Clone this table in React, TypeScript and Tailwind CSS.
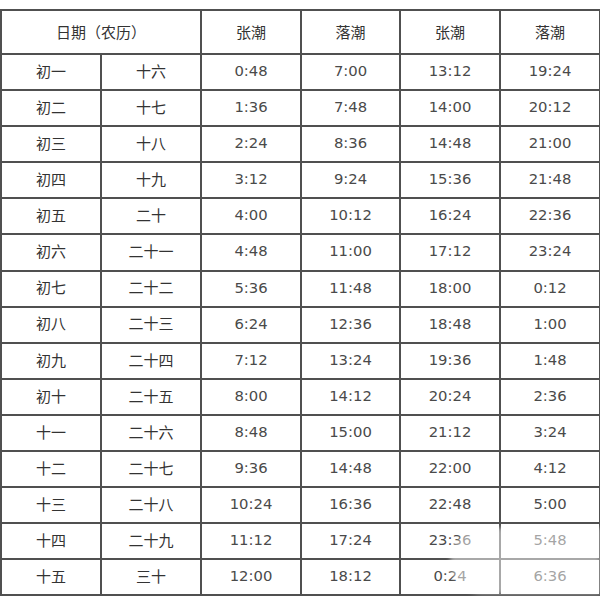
const rows: [string, string, string, string, string, string][] = [
  ['初一', '十六', '0:48', '7:00', '13:12', '19:24'],
  ['初二', '十七', '1:36', '7:48', '14:00', '20:12'],
  ['初三', '十八', '2:24', '8:36', '14:48', '21:00'],
  ['初四', '十九', '3:12', '9:24', '15:36', '21:48'],
  ['初五', '二十', '4:00', '10:12', '16:24', '22:36'],
  ['初六', '二十一', '4:48', '11:00', '17:12', '23:24'],
  ['初七', '二十二', '5:36', '11:48', '18:00', '0:12'],
  ['初八', '二十三', '6:24', '12:36', '18:48', '1:00'],
  ['初九', '二十四', '7:12', '13:24', '19:36', '1:48'],
  ['初十', '二十五', '8:00', '14:12', '20:24', '2:36'],
  ['十一', '二十六', '8:48', '15:00', '21:12', '3:24'],
  ['十二', '二十七', '9:36', '14:48', '22:00', '4:12'],
  ['十三', '二十八', '10:24', '16:36', '22:48', '5:00'],
  ['十四', '二十九', '11:12', '17:24', '23:36', '5:48'],
  ['十五', '三十', '12:00', '18:12', '0:24', '6:36'],
];

const cjk = { fontFamily: '"Noto Sans CJK SC", "Noto Sans", sans-serif' };
const num = { fontFamily: '"DejaVu Sans", Verdana, sans-serif' };

export default function App() {
  return (
    <div className="relative w-[600px] h-[596px] bg-white pt-[9px]">
      <table className="w-[599px] border-collapse table-fixed text-[#333]">
        <colgroup>
          <col className="w-[100px]" />
          <col className="w-[100px]" />
          <col className="w-[100px]" />
          <col className="w-[99px]" />
          <col className="w-[100px]" />
          <col className="w-[100px]" />
        </colgroup>
        <thead>
          <tr className="h-[44px]">
            <th colSpan={2} style={cjk} className="border-2 border-[#505050] text-[15px] font-normal">
              日期（农历）
            </th>
            <th style={cjk} className="border-2 border-[#505050] text-[15px] font-normal">张潮</th>
            <th style={cjk} className="border-2 border-[#505050] text-[15px] font-normal">落潮</th>
            <th style={cjk} className="border-2 border-[#505050] text-[15px] font-normal">张潮</th>
            <th style={cjk} className="border-2 border-[#505050] text-[15px] font-normal">落潮</th>
          </tr>
        </thead>
        <tbody>
          {rows.map((r) => (
            <tr key={r[0]} className="h-[36.1px]">
              <td style={cjk} className="border-2 border-[#505050] text-center text-[15px] pb-[2px]">{r[0]}</td>
              <td style={cjk} className="border-2 border-[#505050] text-center text-[15px] pb-[2px]">{r[1]}</td>
              {r.slice(2).map((t, i) => (
                <td key={i} style={num} className="border-2 border-[#505050] text-center text-[14.8px] text-[#4a4a4a] pb-[2px]">
                  {t}
                </td>
              ))}
            </tr>
          ))}
        </tbody>
      </table>
      {/* faded watermark over the bottom-right corner */}
      <div className="absolute right-0 bottom-[2px] w-[150px] h-[66px] bg-white/50 blur-[2px] rounded-l-full" />
    </div>
  );
}
